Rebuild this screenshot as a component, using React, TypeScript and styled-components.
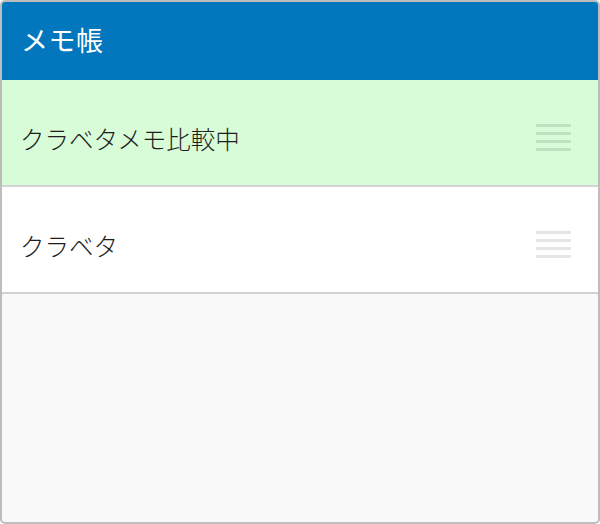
import styled, { createGlobalStyle } from 'styled-components';

const GlobalStyle = createGlobalStyle`
    html, body {
        margin: 0;
        padding: 0;
        background: #ffffff;
    }
    body {
        font-family: "Noto Sans CJK JP", "Noto Sans", sans-serif;
    }
`;

const Frame = styled.div`
    box-sizing: border-box;
    width: 600px;
    height: 524px;
    display: flex;
    flex-direction: column;
    border: 2px solid #bdbdbd;
    border-radius: 5px;
    overflow: hidden;
    background: #f9f9f9;
`;

const Header = styled.header`
    box-sizing: border-box;
    height: 78px;
    flex: none;
    display: flex;
    align-items: center;
    padding: 0 0 4px 19px;
    background: #0277bd;
    color: #ffffff;
    font-size: 27px;
    letter-spacing: 0.5px;
`;

const List = styled.ul`
    margin: 0;
    padding: 0;
    list-style: none;
`;

const Row = styled.li<{ $active?: boolean }>`
    box-sizing: border-box;
    height: 107px;
    display: flex;
    align-items: center;
    justify-content: space-between;
    padding: 12px 27px 0 18px;
    background: ${({ $active }) => ($active ? '#d7fcd7' : '#ffffff')};
    border-bottom: 2px solid #d3d3d3;
    color: #1e1e1e;
    font-size: 24.5px;
    font-weight: 300;
`;

const Handle = styled.div`
    width: 35px;
    display: flex;
    flex-direction: column;
    gap: 5px;
    margin-top: -3px;
`;

const Bar = styled.span`
    display: block;
    height: 3px;
    background: rgba(0, 0, 0, 0.1);
`;

const DragHandle = () => (
    <Handle>
        <Bar />
        <Bar />
        <Bar />
        <Bar />
    </Handle>
);

const memos = [
    { title: 'クラベタメモ比較中', active: true },
    { title: 'クラベタ', active: false },
];

export default function App() {
    return (
        <>
            <GlobalStyle />
            <Frame>
                <Header>メモ帳</Header>
                <List>
                    {memos.map((memo) => (
                        <Row key={memo.title} $active={memo.active}>
                            <span>{memo.title}</span>
                            <DragHandle />
                        </Row>
                    ))}
                </List>
            </Frame>
        </>
    );
}
